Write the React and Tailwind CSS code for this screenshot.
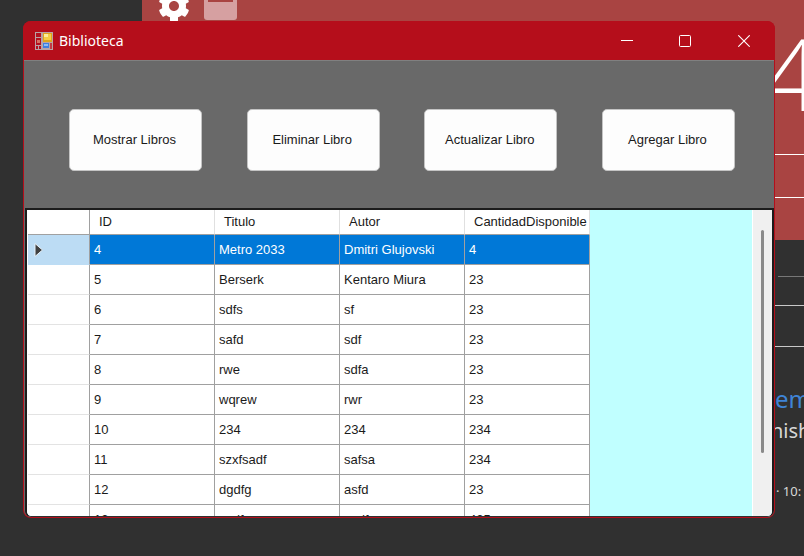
import { FaCog } from "react-icons/fa";

const COLUMNS = ["ID", "Titulo", "Autor", "CantidadDisponible"];

const BOOKS = [
  ["4", "Metro 2033", "Dmitri Glujovski", "4"],
  ["5", "Berserk", "Kentaro Miura", "23"],
  ["6", "sdfs", "sf", "23"],
  ["7", "safd", "sdf", "23"],
  ["8", "rwe", "sdfa", "23"],
  ["9", "wqrew", "rwr", "23"],
  ["10", "234", "234", "234"],
  ["11", "szxfsadf", "safsa", "234"],
  ["12", "dgdfg", "asfd", "23"],
  ["13", "asdf", "asdf", "425"],
];

const ACTIONS = ["Mostrar Libros", "Eliminar Libro", "Actualizar Libro", "Agregar Libro"];

function FormIcon() {
  return (
    <svg width="18" height="18" viewBox="0 0 18 18" aria-hidden="true">
      <rect width="18" height="18" fill="#b9a3a6" />
      <rect x="1" y="1" width="5" height="4" fill="#b3101f" />
      <rect x="1" y="6" width="5" height="7" fill="#b3101f" />
      <rect x="2" y="8" width="3" height="3" fill="#d9705f" />
      <rect x="1" y="14" width="2" height="3" fill="#b3101f" />
      <rect x="4" y="14" width="2" height="3" fill="#b3101f" />
      <rect x="15" y="11" width="2" height="6" fill="#c23a45" />
      <rect x="8" y="1" width="9" height="9" fill="#dfa51a" />
      <rect x="9" y="2" width="7" height="6" fill="#f4cf45" />
      <rect x="9" y="2" width="4" height="3" fill="#fcee9c" />
      <rect x="8" y="11" width="6" height="5" fill="#3f7fe0" />
      <rect x="9" y="12" width="4" height="2" fill="#8dbbf5" />
    </svg>
  );
}

function Backdrop() {
  return (
    <div className="flex h-full overflow-hidden">
      <div className="w-[142px] shrink-0" />
      <div className="flex min-w-0 flex-1 justify-between bg-[linear-gradient(#a94442_240px,transparent_240px)]">
        <div className="-mt-[10px] flex gap-[14px] pl-4">
          <FaCog className="size-8 text-white" />
          <svg width="34" height="32" viewBox="0 0 34 32" aria-hidden="true">
            <rect width="33" height="30" rx="3" fill="#d6a0a1" />
            <rect x="4" y="4" width="25" height="8" fill="#a94442" />
          </svg>
        </div>
        <div className="w-[41px] shrink-0 overflow-hidden font-['Noto_Sans',sans-serif]">
          <div className="h-[155px] border-b border-white pt-4 font-['Open_Sans',sans-serif] text-[100px] leading-[112px] font-light text-white">
            4
          </div>
          <div className="h-[43px] border-b border-white" />
          <div className="ml-[15px] h-[79px] border-b border-[#777777]" />
          <div className="h-[29px] border-b border-[#c8c8c8]" />
          <div className="h-[41px] border-b border-[#c8c8c8]" />
          <div className="flex flex-col whitespace-nowrap pt-9 pl-[12px] text-[#d8d8d8]">
            <a href="#" className="text-[24px] leading-8 text-[#3f84d6]">em</a>
            <p className="-ml-[4px] text-[20px] leading-8">nish</p>
            <p className="mt-8 pl-[1px] text-[13px] leading-6">· 10:</p>
          </div>
        </div>
      </div>
    </div>
  );
}

function TitleBar() {
  return (
    <header className="flex h-[39px] shrink-0 items-center bg-[#b50e1b] pr-px pl-3 text-white">
      <FormIcon />
      <h1 className="ml-[6px] flex-1 font-['Noto_Sans',sans-serif] text-[14px] leading-5">Biblioteca</h1>
      <button type="button" aria-label="Minimizar" className="grid h-full w-[58px] place-items-center">
        <svg width="12" height="12" viewBox="0 0 12 12" stroke="currentColor">
          <path d="M0 5.500H12" />
        </svg>
      </button>
      <button type="button" aria-label="Maximizar" className="grid h-full w-[58px] place-items-center">
        <svg width="12" height="12" viewBox="0 0 12 12" fill="none" stroke="currentColor">
          <rect x="0.5" y="0.5" width="11" height="11" rx="1" />
        </svg>
      </button>
      <button type="button" aria-label="Cerrar" className="grid h-full w-[60px] place-items-center">
        <svg width="12" height="12" viewBox="0 0 12 12" stroke="currentColor" strokeWidth="1.1">
          <path d="M0.300 0.300L11.700 11.700M11.700 0.300L0.300 11.700" />
        </svg>
      </button>
    </header>
  );
}

function BookTable() {
  return (
    <table className="w-[562px] table-fixed border-separate border-spacing-0 self-start bg-white text-left">
      <colgroup>
        <col className="w-[62px]" />
        <col />
        <col />
        <col />
        <col />
      </colgroup>
      <thead>
        <tr className="h-[25px]">
          <th className="border-r border-b border-[#a0a0a0] p-0" />
          {COLUMNS.map((name) => (
            <th
              key={name}
              scope="col"
              className="border-r border-b border-r-[#e0e0e0] border-b-[#a0a0a0] p-0 pl-[9px] leading-5 font-normal whitespace-nowrap"
            >
              {name}
            </th>
          ))}
        </tr>
      </thead>
      <tbody>
        {BOOKS.map((book, index) => {
          const selected = index === 0;
          return (
            <tr key={book[0]} className={selected ? "h-[30px] bg-[#0078d7] text-white" : "h-[30px]"}>
              <th
                scope="row"
                className={
                  selected
                    ? "border-r border-b border-r-[#a0a0a0] border-b-[#bcdcf4] bg-[#bcdcf4] p-0 pl-[6px]"
                    : "border-r border-b border-r-[#a0a0a0] border-b-[#e3e3e3] p-0"
                }
              >
                {selected && (
                  <svg width="9" height="14" viewBox="0 0 9 14" aria-label="Fila actual">
                    <path d="M1 0.500L8.500 7L1 13.500Z" fill="#404040" stroke="#e8f2fa" strokeWidth="1" />
                  </svg>
                )}
              </th>
              {book.map((value, column) => (
                <td key={COLUMNS[column]} className="border-r border-b border-[#a0a0a0] p-0 pl-1 leading-5 whitespace-nowrap">
                  {value}
                </td>
              ))}
            </tr>
          );
        })}
      </tbody>
    </table>
  );
}

export default function App() {
  return (
    <div className="relative h-screen overflow-hidden bg-[#303030]">
      <Backdrop />
      <main className="absolute top-[21px] right-[29px] bottom-[38px] left-[23px] flex flex-col overflow-hidden rounded-lg bg-[#b50e1b] font-['Liberation_Sans',Arial,sans-serif] text-[13px] text-[#1a1a1a]">
        <TitleBar />
        <div className="mx-px mb-px flex min-h-0 flex-1 flex-col overflow-hidden rounded-b-[7px] bg-[#696969]">
          <div className="flex h-[148px] shrink-0 items-center justify-between border-t border-[#808080] pt-[10px] pr-[39px] pl-[45px]">
            {ACTIONS.map((label) => (
              <button
                key={label}
                type="button"
                className="h-[62px] w-[133px] rounded-[5px] border border-[#c4c4c4] bg-[#fdfdfd] pr-[2px] whitespace-nowrap"
              >
                {label}
              </button>
            ))}
          </div>
          <div className="ml-px flex min-h-0 flex-1 overflow-hidden rounded-b-[6px] border-2 border-b border-[#1c1c1c] border-b-[#303030] bg-[#c0ffff]">
            <div className="flex min-w-0 flex-1 overflow-hidden border-l border-white">
              <BookTable />
            </div>
            <div className="flex w-[20px] shrink-0 flex-col border-l border-white bg-[#f0f0f0] pt-5 pl-2">
              <div className="h-[223px] w-[3px] rounded-full bg-[#8a8a8a]" />
            </div>
          </div>
        </div>
      </main>
    </div>
  );
}
